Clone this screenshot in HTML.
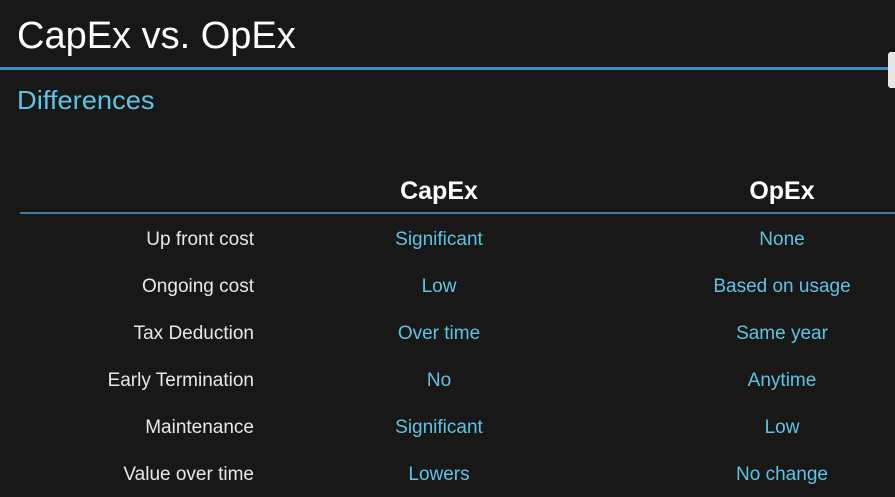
<!DOCTYPE html>
<html><head><meta charset="utf-8"><style>
body{margin:0;width:895px;height:497px;background:#181818;overflow:hidden;position:relative;font-family:"Liberation Sans",sans-serif}
.a{position:absolute;white-space:nowrap}
.t{left:17px;top:15px;font-size:38px;color:#fff;transform:scaleX(1.0);transform-origin:left}
.hr{left:0;top:67px;width:890px;height:3px;background:#3a8ec6}
.d{left:17px;top:85px;font-size:26px;color:#5ec4e4;transform:scaleX(1.05);transform-origin:left}
.h{top:177px;font-size:25px;font-weight:bold;color:#fff;width:200px;text-align:center}
.hl{left:20px;top:212px;width:875px;height:2px;background:#3e7ea6}
.l{right:641px;font-size:19px;color:#e8e8e8;text-align:right}
.c{font-size:19px;color:#5ec4e4;width:260px;text-align:center}
</style></head><body>
<div class="a t">CapEx vs. OpEx</div>
<div class="a hr"></div>
<div class="a" style="left:888px;top:52px;width:10px;height:36px;background:#e8e8e8;border-radius:3px"></div>
<div class="a d">Differences</div>
<div class="a h" style="left:339px">CapEx</div>
<div class="a h" style="left:682px">OpEx</div>
<div class="a hl"></div>
<div class="a l" style="top:229px">Up front cost</div>
<div class="a l" style="top:276px">Ongoing cost</div>
<div class="a l" style="top:323px">Tax Deduction</div>
<div class="a l" style="top:370px">Early Termination</div>
<div class="a l" style="top:417px">Maintenance</div>
<div class="a l" style="top:464px">Value over time</div>
<div class="a c" style="left:309px;top:229px">Significant</div>
<div class="a c" style="left:309px;top:276px">Low</div>
<div class="a c" style="left:309px;top:323px">Over time</div>
<div class="a c" style="left:309px;top:370px">No</div>
<div class="a c" style="left:309px;top:417px">Significant</div>
<div class="a c" style="left:309px;top:464px">Lowers</div>
<div class="a c" style="left:652px;top:229px">None</div>
<div class="a c" style="left:652px;top:276px">Based on usage</div>
<div class="a c" style="left:652px;top:323px">Same year</div>
<div class="a c" style="left:652px;top:370px">Anytime</div>
<div class="a c" style="left:652px;top:417px">Low</div>
<div class="a c" style="left:652px;top:464px">No change</div>
</body></html>
